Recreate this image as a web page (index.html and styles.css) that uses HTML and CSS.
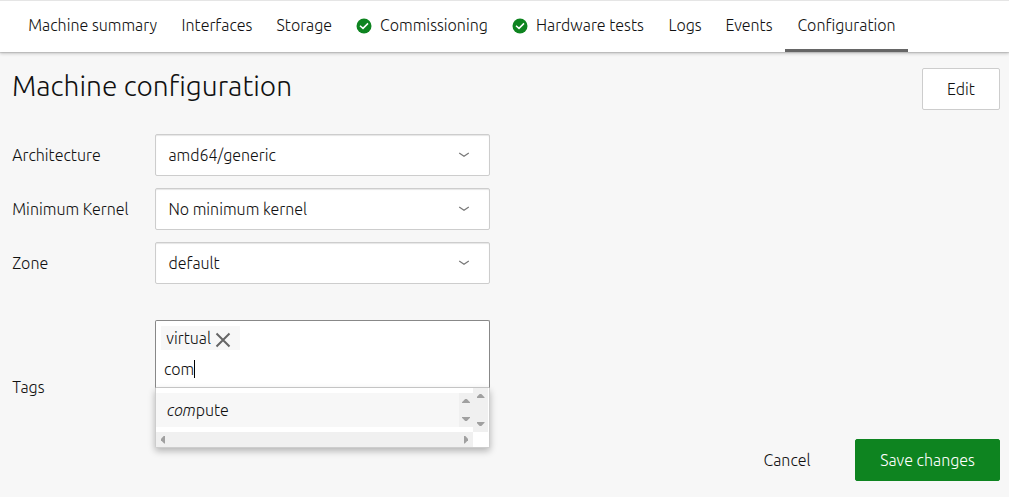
FILE: index.html
```html
<!DOCTYPE html>
<html lang="en">
<head>
<meta charset="utf-8">
<title>Machine configuration</title>
<link rel="stylesheet" href="styles.css">
</head>
<body>
<nav class="tabs">
  <a class="tab tab-summary">Machine summary</a>
  <a class="tab tab-interfaces">Interfaces</a>
  <a class="tab tab-storage">Storage</a>
  <a class="tab tab-commissioning"><svg class="success" viewBox="0 0 16 16"><circle cx="8" cy="8" r="7.5"/><path d="M4 7.800 7 10.400l5-5"/></svg>Commissioning</a>
  <a class="tab tab-hardware"><svg class="success" viewBox="0 0 16 16"><circle cx="8" cy="8" r="7.5"/><path d="M4 7.800 7 10.400l5-5"/></svg>Hardware tests</a>
  <a class="tab tab-logs">Logs</a>
  <a class="tab tab-events">Events</a>
  <a class="tab tab-configuration active">Configuration</a>
</nav>
<main class="content">
  <header class="heading">
    <h1 class="title">Machine configuration</h1>
    <button class="button edit">Edit</button>
  </header>
  <form class="form">
    <div class="row"><label class="label">Architecture</label><div class="select"><span>amd64/generic</span><svg class="chevron" viewBox="0 0 16 16"><path d="M3.200 6 8 9.200 12.800 6"/></svg></div></div>
    <div class="row"><label class="label">Minimum Kernel</label><div class="select"><span>No minimum kernel</span><svg class="chevron" viewBox="0 0 16 16"><path d="M3.200 6 8 9.200 12.800 6"/></svg></div></div>
    <div class="row"><label class="label">Zone</label><div class="select"><span>default</span><svg class="chevron" viewBox="0 0 16 16"><path d="M3.200 6 8 9.200 12.800 6"/></svg></div></div>
    <div class="row tags-row">
      <label class="label l-tags">Tags</label>
      <div class="tags">
        <div class="tag-box">
          <span class="chip"><span class="chip-text">virtual</span><svg class="close" viewBox="0 0 16 16"><path d="M1.500 1.500l13 13M14.500 1.500l-13 13"/></svg></span>
          <div class="query"><span class="query-text">com</span><i class="caret"></i></div>
        </div>
        <div class="menu">
          <div class="menu-main">
            <div class="option"><span class="option-text"><em>com</em>pute</span>
              <div class="bar-inner"><i class="up"></i><i class="down"></i></div>
            </div>
            <div class="bar-outer"><i class="up"></i><i class="down"></i></div>
          </div>
          <div class="bar-bottom"><i class="left"></i><i class="right"></i></div>
        </div>
      </div>
    </div>
  </form>
  <footer class="actions">
    <button class="button cancel">Cancel</button>
    <button class="button save">Save changes</button>
  </footer>
</main>
</body>
</html>
```

FILE: styles.css
```css
* { box-sizing: border-box; }
body {
  margin: 0;
  width: 1009px;
  height: 497px;
  overflow: hidden;
  background: #f7f7f7;
  color: #111;
  font: 300 16px/24px Ubuntu, "Noto Sans", "Open Sans", sans-serif;
  white-space: nowrap;
}
.tabs {
  position: relative;
  display: flex;
  height: 52px;
  padding-left: 16px;
  border-top: 1px solid #e5e5e5;
  background: #fff;
  box-shadow: 0 1px 1px rgba(0,0,0,.12), 0 2px 3px rgba(0,0,0,.16);
}
.tab {
  display: flex;
  height: 51px;
  padding: 12px 0 0 12px;
}
.tab-summary { width: 153.500px; padding-left: 12.300px; }
.tab-interfaces { width: 95px; }
.tab-storage { width: 79.500px; }
.tab-commissioning { width: 156px; }
.tab-hardware { width: 156px; }
.tab-logs { width: 57.500px; padding-left: 12.400px; }
.tab-events { width: 71.500px; }
.tab-configuration { width: 123px; padding-left: 12.400px; }
.active { border-bottom: 3px solid #666; }
.success { width: 16px; height: 16px; margin: 5px 8px 0 0; fill: #0e8420; }
.success path { fill: none; stroke: #fff; stroke-width: 1.5; }
.heading { display: flex; justify-content: space-between; height: 82px; padding: 16px 9px 0 12px; }
.title { margin: 2px 0 0; font-size: 28.100px; line-height: 32px; font-weight: 300; }
.button { height: 42px; padding: 0; border: 1px solid #cdcdcd; border-radius: 2px; background: #fff; color: #111; font: inherit; }
.edit { width: 78px; }
.form { height: 305px; padding-left: 12px; }
.row { display: flex; align-items: center; height: 42px; margin-bottom: 12px; }
.label { width: 143px; padding-left: .3px; }
.select {
  display: flex; align-items: center; justify-content: space-between;
  width: 335px; height: 42px; padding: 0 17px 0 12.400px;
  border: 1px solid #cdcdcd; border-radius: 2px; background: #fff;
  box-shadow: inset 0 1px 1px rgba(0,0,0,.1);
}
.chevron { width: 16px; height: 16px; fill: none; stroke: #777; stroke-width: 1.2; }
.tags-row { height: 128px; margin-top: 36px; align-items: flex-start; }
.l-tags { padding-top: 55px; }
.tags { width: 335px; }
.tag-box { height: 68px; padding: 5px; border: 1px solid #888; border-bottom-color: #cdcdcd; border-radius: 2px 2px 0 0; background: #fff; }
.chip { display: flex; width: 79px; height: 24px; padding-left: 5.300px; background: #f7f7f7; }
.chip-text { width: 48.700px; }
.close { width: 16px; height: 16px; margin-top: 6px; fill: none; stroke: #666; stroke-width: 2; }
.query { display: flex; align-items: center; height: 32px; padding: 5px 0 0 3px; }
.query-text { width: 30px; }
.caret { width: 1px; height: 18px; background: #000; }
.menu { height: 60px; border: 1px solid #cdcdcd; border-top: 0; border-radius: 0 0 2px 2px; background: #fff; box-shadow: 0 3px 7px rgba(0,0,0,.28); }
.menu-main { display: flex; height: 44px; }
.option { display: flex; width: 317px; height: 34px; margin-top: 5px; padding-left: 11px; justify-content: space-between; align-items: center; background: #f7f7f7; }
.option-text { letter-spacing: -.08px; }
.bar-inner, .bar-outer { display: flex; flex-direction: column; align-items: center; justify-content: space-between; background: #f0f0f0; }
.bar-inner { width: 14px; height: 34px; padding: 6px 0; }
.bar-outer { width: 15px; height: 44px; padding: 6px 0; }
.bar-bottom { display: flex; justify-content: space-between; align-items: center; width: 317px; height: 15px; padding: 0 5px; background: #f0f0f0; }
.up, .down { width: 8px; height: 4px; background: #a0a0a0; }
.up { clip-path: polygon(40% 0, 60% 0, 100% 80%, 100% 100%, 0 100%, 0 80%); }
.down { clip-path: polygon(0 0, 100% 0, 100% 20%, 60% 100%, 40% 100%, 0 20%); }
.left, .right { width: 4px; height: 8px; background: #a0a0a0; }
.left { clip-path: polygon(0 40%, 80% 0, 100% 0, 100% 100%, 80% 100%, 0 60%); }
.right { clip-path: polygon(0 0, 20% 0, 100% 40%, 100% 60%, 20% 100%, 0 100%); }
.actions { display: flex; justify-content: flex-end; padding-right: 9px; }
.cancel { width: 94px; margin-right: 21px; border: 0; background: transparent; }
.save { width: 145px; border-color: #0e8420; background: #0e8420; color: #fff; }
```
